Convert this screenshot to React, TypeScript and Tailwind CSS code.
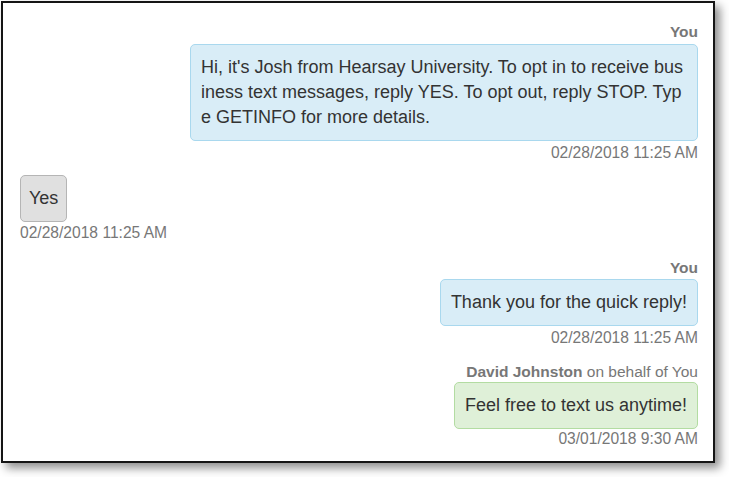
import React from "react";

const font = { fontFamily: '"Liberation Sans", Arial, Helvetica, sans-serif' };

function Label({ children, className = "" }: { children: React.ReactNode; className?: string }) {
  return <div className={`text-[15.5px] leading-[20px] text-[#777] ${className}`}>{children}</div>;
}

function Stamp({ children, className = "" }: { children: React.ReactNode; className?: string }) {
  return <div className={`text-[15.6px] leading-[20px] text-[#777] ${className}`}>{children}</div>;
}

export default function App() {
  return (
    <div className="w-[729px] h-[477px] bg-white overflow-hidden" style={font}>
      <div className="ml-[1px] mt-[1px] w-[714px] h-[462px] border-2 border-[#151515] bg-white shadow-[5px_5px_9px_rgba(0,0,0,0.45)] flex flex-col pl-[16px] pr-[15px] pt-[19px]">
        {/* Group 1 */}
        <div className="flex flex-col items-end">
          <Label className="font-bold">You</Label>
          <div className="mt-[2px] max-w-[508px] rounded-[5px] border border-[#a9d8ee] bg-[#d9edf7] pl-[10px] pr-[11px] py-[10px] text-[18px] leading-[25px] text-[#333] break-all">
            Hi, it's Josh from Hearsay University. To opt in to receive business text messages, reply YES. To opt out, reply STOP. Type GETINFO for more details.
          </div>
          <Stamp className="mt-[2px]">02/28/2018 11:25 AM</Stamp>
        </div>

        {/* Group 2 */}
        <div className="mt-[12px] flex flex-col items-start">
          <div className="ml-[1px] rounded-[5px] border border-[#b5b5b5] bg-[#e0e0e0] px-[8px] py-[10px] text-[18px] leading-[25px] text-[#333]">
            Yes
          </div>
          <Stamp className="mt-[1px] ml-[1px]">02/28/2018 11:25 AM</Stamp>
        </div>

        {/* Group 3 */}
        <div className="mt-[15px] flex flex-col items-end">
          <Label className="font-bold">You</Label>
          <div className="mt-[1px] rounded-[5px] border border-[#a9d8ee] bg-[#d9edf7] px-[10px] py-[10px] text-[18px] leading-[25px] text-[#333]">
            Thank you for the quick reply!
          </div>
          <Stamp className="mt-[2px]">02/28/2018 11:25 AM</Stamp>
        </div>

        {/* Group 4 */}
        <div className="mt-[14px] flex flex-col items-end">
          <Label>
            <span className="font-bold">David Johnston</span> on behalf of You
          </Label>
          <div className="mt-[0px] rounded-[5px] border border-[#b3dca2] bg-[#dff0d8] px-[10px] py-[10px] text-[18px] leading-[25px] text-[#333]">
            Feel free to text us anytime!
          </div>
          <Stamp className="mt-[0px]">03/01/2018 9:30 AM</Stamp>
        </div>
      </div>
    </div>
  );
}
